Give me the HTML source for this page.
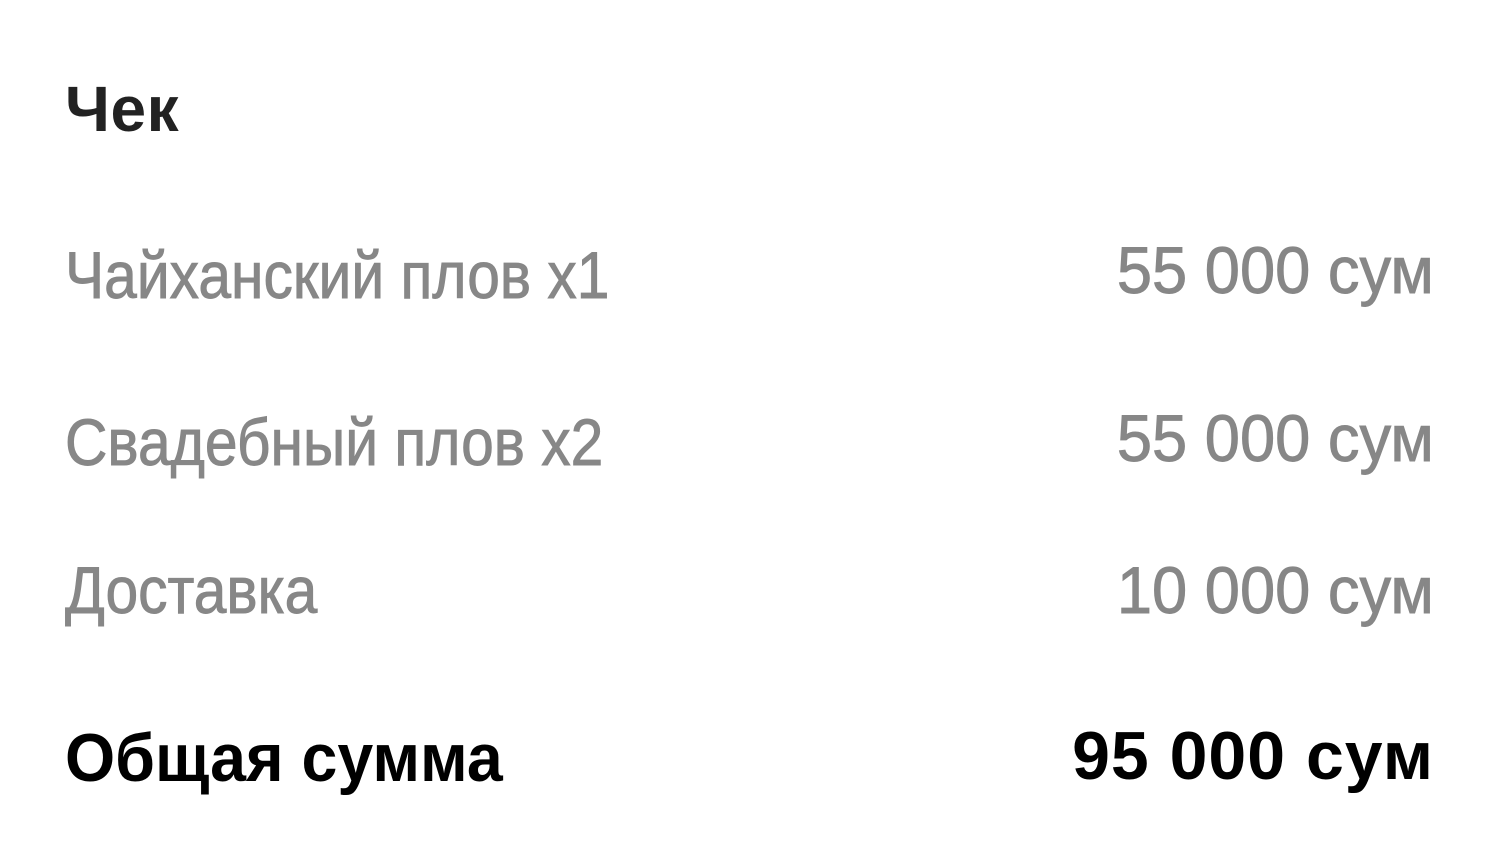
<!DOCTYPE html>
<html><head><meta charset="utf-8"><style>
html,body{margin:0;padding:0;background:#fff;width:1500px;height:848px;overflow:hidden;font-family:"Liberation Sans",sans-serif}
.t{position:absolute;left:65px;font-size:66px;line-height:1;white-space:nowrap;transform-origin:left center}
.r{position:absolute;right:66px;font-size:66px;line-height:1;white-space:nowrap;text-align:right;transform-origin:right center}
.g{color:#878787;-webkit-text-stroke:0.9px #878787}
.t.g{transform:scaleX(0.89)}
.r.g{transform:scaleX(0.958)}
</style></head><body>
<div class="t" style="top:77px;color:#222;font-weight:bold;font-size:64px;letter-spacing:0.5px">Чек</div>
<div class="t g" style="top:242px">Чайханский плов x1</div>
<div class="r g" style="top:237px">55 000 сум</div>
<div class="t g" style="top:409px">Свадебный плов x2</div>
<div class="r g" style="top:405px">55 000 сум</div>
<div class="t g" style="top:557px">Доставка</div>
<div class="r g" style="top:557px">10 000 сум</div>
<div class="t" style="top:724px;color:#000;font-weight:bold;font-size:68px;transform:scaleX(0.948)">Общая сумма</div>
<div class="r" style="top:722px;color:#000;font-weight:bold;font-size:68px;letter-spacing:1px">95 000 сум</div>
</body></html>
